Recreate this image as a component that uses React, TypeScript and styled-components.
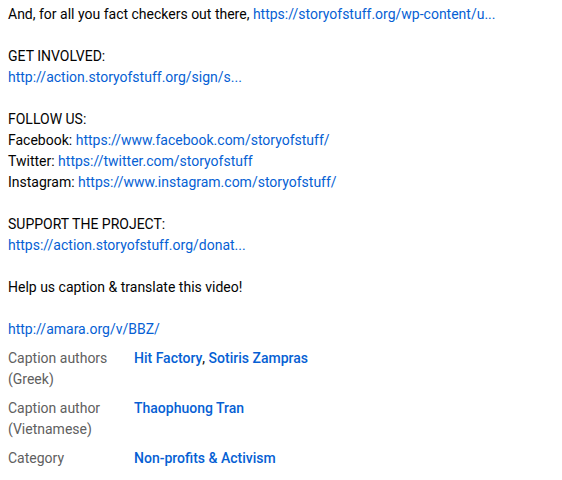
import React from "react";
import styled, { createGlobalStyle } from "styled-components";

const GlobalStyle = createGlobalStyle`
  html, body {
    margin: 0;
    padding: 0;
    background: #ffffff;
  }
  body {
    font-family: Roboto, "Noto Sans", Arial, sans-serif;
  }
`;

const Wrapper = styled.div`
  padding: 4px 8px 0 8px;
  width: 546px;
  font-family: Roboto, "Noto Sans", Arial, sans-serif;
`;

const Description = styled.div`
  font-size: 14px;
  line-height: 21px;
  color: #030303;
  white-space: pre-wrap;
`;

const Link = styled.a`
  color: #065fd4;
  text-decoration: none;
`;

const MetaList = styled.div`
  display: flex;
  flex-direction: column;
`;

const MetaRow = styled.div`
  display: flex;
  flex-direction: row;
  margin-top: 8px;
  font-size: 14px;
  line-height: 21px;
`;

const MetaLabel = styled.div`
  width: 126px;
  flex-shrink: 0;
  color: #606060;
  white-space: pre-line;
`;

const MetaValue = styled.div`
  flex: 1;
  color: #030303;
`;

const MetaLink = styled.a`
  color: #065fd4;
  font-weight: 500;
  text-decoration: none;
`;

interface MetaEntry {
  label: string;
  values: string[];
}

const meta: MetaEntry[] = [
  { label: "Caption authors\n(Greek)", values: ["Hit Factory", "Sotiris Zampras"] },
  { label: "Caption author\n(Vietnamese)", values: ["Thaophuong Tran"] },
  { label: "Category", values: ["Non-profits & Activism"] },
];

export default function App() {
  return (
    <>
      <GlobalStyle />
      <Wrapper>
        <Description>
          {"And, for all you fact checkers out there, "}
          <Link href="#">https://storyofstuff.org/wp-content/u...</Link>
          {"\n\nGET INVOLVED:\n"}
          <Link href="#">http://action.storyofstuff.org/sign/s...</Link>
          {"\n\nFOLLOW US:\nFacebook: "}
          <Link href="#">https://www.facebook.com/storyofstuff/</Link>
          {"\nTwitter: "}
          <Link href="#">https://twitter.com/storyofstuff</Link>
          {"\nInstagram: "}
          <Link href="#">https://www.instagram.com/storyofstuff/</Link>
          {"\n\nSUPPORT THE PROJECT:\n"}
          <Link href="#">https://action.storyofstuff.org/donat...</Link>
          {"\n\nHelp us caption & translate this video!\n\n"}
          <Link href="#">http://amara.org/v/BBZ/</Link>
        </Description>
        <MetaList>
          {meta.map((entry) => (
            <MetaRow key={entry.label}>
              <MetaLabel>{entry.label}</MetaLabel>
              <MetaValue>
                {entry.values.map((v, i) => (
                  <React.Fragment key={v}>
                    {i > 0 && ", "}
                    <MetaLink href="#">{v}</MetaLink>
                  </React.Fragment>
                ))}
              </MetaValue>
            </MetaRow>
          ))}
        </MetaList>
      </Wrapper>
    </>
  );
}
